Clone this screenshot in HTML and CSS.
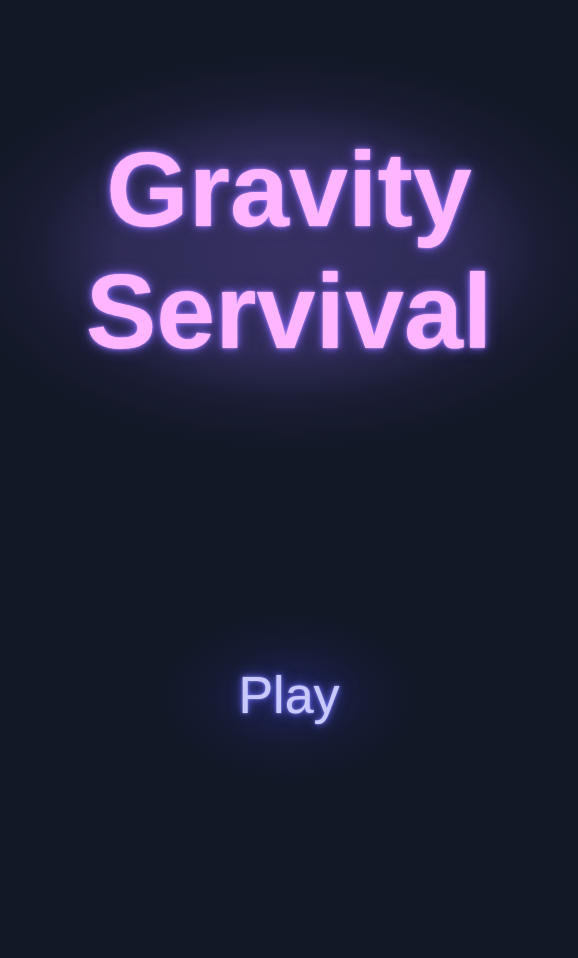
FILE: index.html
```html
<!DOCTYPE html>
<html>
<head>
<meta charset="utf-8">
<link rel="stylesheet" href="styles.css">
</head>
<body>
<main class="screen">
  <h1 class="title">Gravity<br>Servival</h1>
  <button class="play">Play</button>
</main>
</body>
</html>
```
FILE: styles.css
```css
html, body {
  margin: 0;
  padding: 0;
  height: 100%;
}
body {
  background-color: #121826;
  font-family: "Liberation Sans", Arial, sans-serif;
}
.screen {
  height: 958px;
  display: flex;
  flex-direction: column;
  align-items: center;
  background-image:
    radial-gradient(ellipse 130px 85px at 50% 697px, rgba(50, 50, 150, 0.45), rgba(40, 40, 120, 0.15) 60%, rgba(18, 24, 38, 0) 100%),
    radial-gradient(ellipse 340px 200px at 50% 252px, rgba(56, 50, 100, 0.95), rgba(52, 47, 95, 0.85) 50%, rgba(38, 36, 72, 0.4) 75%, rgba(18, 24, 38, 0) 100%);
}
.title {
  margin: 128px 0 0;
  font-size: 106px;
  line-height: 122px;
  font-weight: bold;
  text-align: center;
  color: #ffb5ff;
  text-shadow:
    0 0 2px #d8a0ff,
    0 0 6px rgba(150, 110, 255, 0.9),
    0 0 14px rgba(120, 95, 250, 0.7);
}
.play {
  margin-top: 293px;
  background: none;
  border: 0;
  padding: 0;
  font-family: inherit;
  font-size: 52px;
  line-height: 60px;
  color: #c9c9ff;
  cursor: pointer;
  text-shadow:
    0 0 2px #9a9aff,
    0 0 6px rgba(110, 110, 255, 0.9),
    0 0 14px rgba(90, 90, 240, 0.6);
}
```
